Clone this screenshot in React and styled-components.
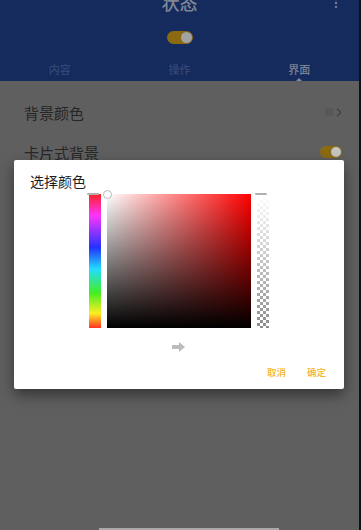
import React from 'react'
import styled, { createGlobalStyle } from 'styled-components'

const GlobalStyle = createGlobalStyle`
  html, body {
    margin: 0;
    padding: 0;
    background: #111;
  }
  body {
    font-family: "Noto Sans CJK SC", "Noto Sans", sans-serif;
  }
`

const Screen = styled.div`
  position: relative;
  width: 361px;
  height: 530px;
  display: flex;
  background: #111;
  overflow: hidden;
`

const Page = styled.div`
  width: 359px;
  height: 530px;
  display: flex;
  flex-direction: column;
  background: #5f5f5f;
`

const Header = styled.header`
  height: 81px;
  background: #152b5d;
  display: flex;
  flex-direction: column;
  align-items: center;
`

const Toolbar = styled.div`
  width: 100%;
  height: 20px;
  margin-top: -8px;
  display: grid;
  grid-template-columns: 1fr auto 1fr;
  align-items: center;
`

const Title = styled.h1`
  grid-column: 2;
  margin: 0;
  font-size: 18px;
  line-height: 20px;
  font-weight: 500;
  color: #7f8594;
`

const MenuDots = styled.svg`
  justify-self: end;
  margin-right: 21px;
  margin-top: 3px;
`

const Switch = styled.div`
  width: ${p => p.$w || 26}px;
  height: ${p => p.$h || 13}px;
  margin-top: ${p => (p.$inline ? 0 : 19)}px;
  border-radius: 7px;
  background: ${p => p.$track};
  display: flex;
  align-items: center;
  justify-content: flex-end;
  padding: 0 1px;
  box-sizing: border-box;
  &::after {
    content: '';
    width: ${p => (p.$h || 13) - 2}px;
    height: ${p => (p.$h || 13) - 2}px;
    border-radius: 50%;
    background: ${p => p.$knob};
  }
`

const Tabs = styled.nav`
  margin-top: auto;
  width: 100%;
  height: 24px;
  display: grid;
  grid-template-columns: repeat(3, 1fr);
`

const Tab = styled.div`
  position: relative;
  display: flex;
  align-items: center;
  justify-content: center;
  font-size: 11px;
  font-weight: 500;
  color: ${p => (p.$active ? '#7c8296' : '#34477a')};
  padding-bottom: 1px;
  ${p =>
    p.$active &&
    `
    &::after {
      content: '';
      position: absolute;
      bottom: 0;
      left: 50%;
      margin-left: -3px;
      border-left: 3px solid transparent;
      border-right: 3px solid transparent;
      border-bottom: 3px solid #80879a;
    }
  `}
`

const Settings = styled.section`
  margin-top: 11px;
  padding: 0 17px 0 24px;
`

const Row = styled.div`
  height: 40px;
  display: flex;
  align-items: center;
  justify-content: space-between;
  font-size: 15px;
  color: #262626;
`

const ColorValue = styled.div`
  display: flex;
  align-items: center;
  gap: 3px;
`

const Swatch = styled.span`
  width: 8px;
  height: 8px;
  background: #585858;
`

const BottomBar = styled.div`
  margin-top: auto;
  align-self: center;
  margin-left: 19px;
  width: 180px;
  height: 2px;
  background: #a9a9a9;
`

const Dialog = styled.div`
  position: absolute;
  left: 14px;
  top: 160px;
  width: 330px;
  height: 229px;
  background: #fff;
  border-radius: 2px;
  box-shadow: 0 6px 14px rgba(0, 0, 0, 0.45);
  display: flex;
  flex-direction: column;
`

const DialogTitle = styled.h2`
  margin: 11px 0 0 16px;
  font-size: 14px;
  line-height: 20px;
  font-weight: 400;
  color: #1e1e1e;
`

const Picker = styled.div`
  margin-top: 3px;
  display: flex;
  justify-content: center;
  gap: 6px;
`

const Strip = styled.div`
  position: relative;
  width: 12px;
  height: 134px;
`

const HueStrip = styled(Strip)`
  background: linear-gradient(
    to bottom,
    #f22 0%,
    #f3f 16%,
    #23f 40%,
    #2df 56%,
    #4e2 74%,
    #fe2 89%,
    #f32 100%
  );
`

const AlphaStrip = styled(Strip)`
  background:
    linear-gradient(to bottom, rgba(255,255,255,1) 0%, rgba(255,255,255,0) 100%),
    repeating-conic-gradient(#8c8c8c 0% 25%, #fff 0% 50%) 0 0 / 6px 6px;
`

const Handle = styled.span`
  position: absolute;
  top: -1px;
  left: ${p => p.$left}px;
  width: 12px;
  height: 2px;
  border-radius: 1px;
  background: #b0b0b0;
`

const SVPanel = styled.div`
  position: relative;
  width: 144px;
  height: 134px;
  background:
    linear-gradient(to bottom, rgba(0,0,0,0), #000),
    linear-gradient(to right, #fff, rgba(255,255,255,0)),
    #f00;
`

const SVMarker = styled.span`
  position: absolute;
  left: -4px;
  top: -4px;
  width: 7px;
  height: 7px;
  border-radius: 50%;
  border: 1px solid #b8b8b8;
  background: #fff;
`

const ArrowRow = styled.div`
  margin-top: 14px;
  display: flex;
  justify-content: center;
`

const Actions = styled.div`
  margin-top: 10px;
  padding-right: 18px;
  display: flex;
  justify-content: flex-end;
  gap: 21px;
`

const ActionButton = styled.button`
  border: none;
  background: none;
  padding: 0;
  height: 20px;
  font-family: inherit;
  font-size: 9.5px;
  font-weight: 500;
  color: #f3b52a;
`

export default function App() {
  return (
    <>
      <GlobalStyle />
      <Screen>
        <Page>
          <Header>
            <Toolbar>
              <Title>状态</Title>
              <MenuDots width="4" height="14" viewBox="0 0 4 14">
                <circle cx="2" cy="2" r="1.3" fill="#6f7690" />
                <circle cx="2" cy="6" r="1.3" fill="#6f7690" />
                <circle cx="2" cy="10" r="1.3" fill="#6f7690" />
              </MenuDots>
            </Toolbar>
            <Switch $track="#8b6a12" $knob="#a3a3a3" />
            <Tabs>
              <Tab>内容</Tab>
              <Tab>操作</Tab>
              <Tab $active>界面</Tab>
            </Tabs>
          </Header>
          <Settings>
            <Row>
              背景颜色
              <ColorValue>
                <Swatch />
                <svg width="6" height="9" viewBox="0 0 6 9">
                  <path d="M1 0.8 L5 4.5 L1 8.2" fill="none" stroke="#2c2c2c" strokeWidth="1" />
                </svg>
              </ColorValue>
            </Row>
            <Row>
              卡片式背景
              <Switch $inline $w={22} $h={12} $track="#8b6a12" $knob="#c4c4c4" />
            </Row>
          </Settings>
          <BottomBar />
        </Page>

        <Dialog>
          <DialogTitle>选择颜色</DialogTitle>
          <Picker>
            <HueStrip>
              <Handle $left={-2} />
            </HueStrip>
            <SVPanel>
              <SVMarker />
            </SVPanel>
            <AlphaStrip>
              <Handle $left={-2} />
            </AlphaStrip>
          </Picker>
          <ArrowRow>
            <svg width="14" height="10" viewBox="0 0 14 10">
              <path d="M0 3 H7 V0 L13 5 L7 10 V7 H0 Z" fill="#bcbcbc" />
            </svg>
          </ArrowRow>
          <Actions>
            <ActionButton>取消</ActionButton>
            <ActionButton>确定</ActionButton>
          </Actions>
        </Dialog>
      </Screen>
    </>
  )
}
